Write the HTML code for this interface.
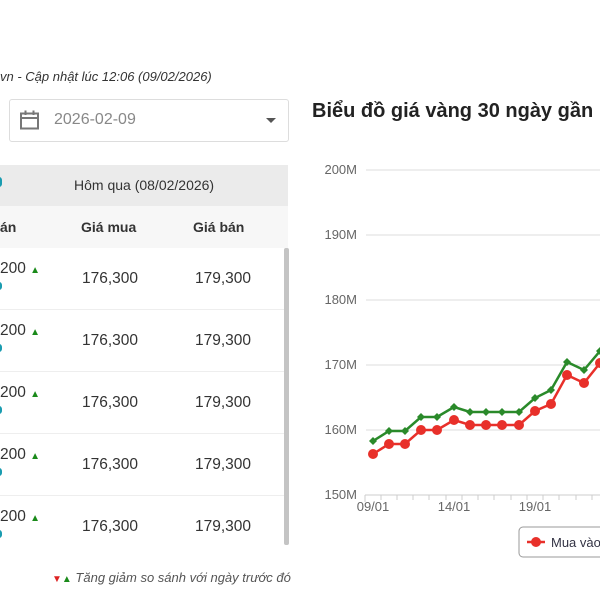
<!DOCTYPE html>
<html><head><meta charset="utf-8"><style>
body{margin:0;width:600px;height:600px;overflow:hidden;background:#fff;font-family:"Liberation Sans",Arial,sans-serif;position:relative}
.a{position:absolute}
.num{font-size:15.5px;color:#333}
.up{color:#1a8a1a;font-size:10px}
</style></head><body>
<div class="a" style="left:0;top:69px;font-size:13px;font-style:italic;color:#333">vn - Cập nhật lúc 12:06 (09/02/2026)</div>
<div class="a" style="left:9px;top:99px;width:278px;height:41px;border:1px solid #ddd;border-radius:3px"></div>
<svg class="a" style="left:19px;top:109px" width="22" height="22" viewBox="0 0 22 22"><rect x="2" y="4.5" width="17" height="15" fill="none" stroke="#777" stroke-width="2"/><line x1="2" y1="9" x2="19" y2="9" stroke="#777" stroke-width="2"/><line x1="6.5" y1="1.5" x2="6.5" y2="6" stroke="#777" stroke-width="2"/><line x1="14.5" y1="1.5" x2="14.5" y2="6" stroke="#777" stroke-width="2"/></svg>
<div class="a" style="left:54px;top:111px;font-size:16px;color:#888">2026-02-09</div>
<div class="a" style="left:266px;top:118px;width:0;height:0;border-left:5px solid transparent;border-right:5px solid transparent;border-top:5px solid #555"></div>
<div class="a" style="left:0;top:165px;width:288px;height:41px;background:#ebebeb"></div>
<div class="a" style="left:0;top:206px;width:288px;height:42px;background:#f7f7f7"></div>
<div class="a" style="left:-4px;top:177px;width:6px;height:10px;border-radius:3px;background:#1a9cb0"></div>
<div class="a" style="left:74px;top:177px;font-size:14px;color:#333">Hôm qua (08/02/2026)</div>
<div class="a" style="left:0;top:219px;font-size:14px;font-weight:bold;color:#333">án</div>
<div class="a" style="left:81px;top:219px;font-size:14px;font-weight:bold;color:#333">Giá mua</div>
<div class="a" style="left:193px;top:219px;font-size:14px;font-weight:bold;color:#333">Giá bán</div>
<div class="a" style="left:284px;top:248px;width:5px;height:297px;background:#c4c4c4;border-radius:2px"></div>
<div id="rows"></div>
<div class="a" style="left:52px;top:570px;font-size:13px;font-style:italic;color:#555"><span style="color:#d22;font-style:normal;font-size:10px">▼</span><span style="color:#1a8a1a;font-style:normal;font-size:10px">▲</span> Tăng giảm so sánh với ngày trước đó</div>
<div class="a" style="left:312px;top:100px;font-size:20px;font-weight:bold;color:#222;white-space:nowrap">Biểu đồ giá vàng 30 ngày gần <span style="color:#e8a23a">n</span></div>
<svg class="a" style="left:300px;top:150px" width="300" height="420" viewBox="300 150 300 420" font-family="Liberation Sans,sans-serif">
<g stroke="#ddd" stroke-width="1"><line x1="366" y1="170" x2="600" y2="170"/><line x1="366" y1="235" x2="600" y2="235"/><line x1="366" y1="300" x2="600" y2="300"/><line x1="366" y1="365" x2="600" y2="365"/><line x1="366" y1="430" x2="600" y2="430"/></g>
<line x1="365" y1="495" x2="600" y2="495" stroke="#ccc"/>
<g stroke="#ccc"><line x1="365" y1="495" x2="365" y2="502"/><line x1="381" y1="495" x2="381" y2="500"/><line x1="397" y1="495" x2="397" y2="500"/><line x1="413" y1="495" x2="413" y2="500"/><line x1="429" y1="495" x2="429" y2="500"/><line x1="446" y1="495" x2="446" y2="500"/><line x1="462" y1="495" x2="462" y2="500"/><line x1="478" y1="495" x2="478" y2="500"/><line x1="494" y1="495" x2="494" y2="500"/><line x1="511" y1="495" x2="511" y2="500"/><line x1="527" y1="495" x2="527" y2="500"/><line x1="543" y1="495" x2="543" y2="500"/><line x1="559" y1="495" x2="559" y2="500"/><line x1="576" y1="495" x2="576" y2="500"/><line x1="592" y1="495" x2="592" y2="500"/></g>
<g fill="#666" font-size="13" text-anchor="end"><text x="357" y="174">200M</text><text x="357" y="239">190M</text><text x="357" y="304">180M</text><text x="357" y="369">170M</text><text x="357" y="434">160M</text><text x="357" y="499">150M</text></g>
<g fill="#666" font-size="13" text-anchor="middle"><text x="373" y="511">09/01</text><text x="454" y="511">14/01</text><text x="535" y="511">19/01</text></g>
<polyline fill="none" stroke="#2a8a2a" stroke-width="2.5" points="373,441 389,431 405,431 421,417 437,417 454,407 470,412 486,412 502,412 519,412 535,398 551,390 567,362 584,370 600,351"/>
<g fill="#2a8a2a"><path d="M373,437l4,4l-4,4l-4,-4z"/><path d="M389,427l4,4l-4,4l-4,-4z"/><path d="M405,427l4,4l-4,4l-4,-4z"/><path d="M421,413l4,4l-4,4l-4,-4z"/><path d="M437,413l4,4l-4,4l-4,-4z"/><path d="M454,403l4,4l-4,4l-4,-4z"/><path d="M470,408l4,4l-4,4l-4,-4z"/><path d="M486,408l4,4l-4,4l-4,-4z"/><path d="M502,408l4,4l-4,4l-4,-4z"/><path d="M519,408l4,4l-4,4l-4,-4z"/><path d="M535,394l4,4l-4,4l-4,-4z"/><path d="M551,386l4,4l-4,4l-4,-4z"/><path d="M567,358l4,4l-4,4l-4,-4z"/><path d="M584,366l4,4l-4,4l-4,-4z"/><path d="M600,347l4,4l-4,4l-4,-4z"/></g>
<polyline fill="none" stroke="#e8302a" stroke-width="2.5" points="373,454 389,444 405,444 421,430 437,430 454,420 470,425 486,425 502,425 519,425 535,411 551,404 567,375 584,383 600,363"/>
<g fill="#e8302a"><circle cx="373" cy="454" r="5"/><circle cx="389" cy="444" r="5"/><circle cx="405" cy="444" r="5"/><circle cx="421" cy="430" r="5"/><circle cx="437" cy="430" r="5"/><circle cx="454" cy="420" r="5"/><circle cx="470" cy="425" r="5"/><circle cx="486" cy="425" r="5"/><circle cx="502" cy="425" r="5"/><circle cx="519" cy="425" r="5"/><circle cx="535" cy="411" r="5"/><circle cx="551" cy="404" r="5"/><circle cx="567" cy="375" r="5"/><circle cx="584" cy="383" r="5"/><circle cx="600" cy="363" r="5"/></g>
<rect x="519" y="527" width="100" height="30" rx="4" fill="#fff" stroke="#999"/>
<line x1="527" y1="542" x2="545" y2="542" stroke="#e8302a" stroke-width="2.5"/><circle cx="536" cy="542" r="5" fill="#e8302a"/>
<text x="551" y="547" font-size="13" fill="#334">Mua vào</text>
</svg>
<script>
var h='';for(var i=0;i<5;i++){var t=248+i*62;
if(i<4)h+='<div class="a" style="left:0;top:'+(t+61)+'px;width:284px;height:1px;background:#eee"></div>';
h+='<div class="a num" style="left:0;top:'+(t+12)+'px">200 <span class="up">▲</span></div>';
h+='<div class="a" style="left:-4px;top:'+(t+34)+'px;width:6px;height:8px;border-radius:3px;background:#1a9cb0"></div>';
h+='<div class="a num" style="left:82px;top:'+(t+22)+'px">176,300</div>';
h+='<div class="a num" style="left:195px;top:'+(t+22)+'px">179,300</div>';}
document.getElementById('rows').innerHTML=h;
</script>
</body></html>
